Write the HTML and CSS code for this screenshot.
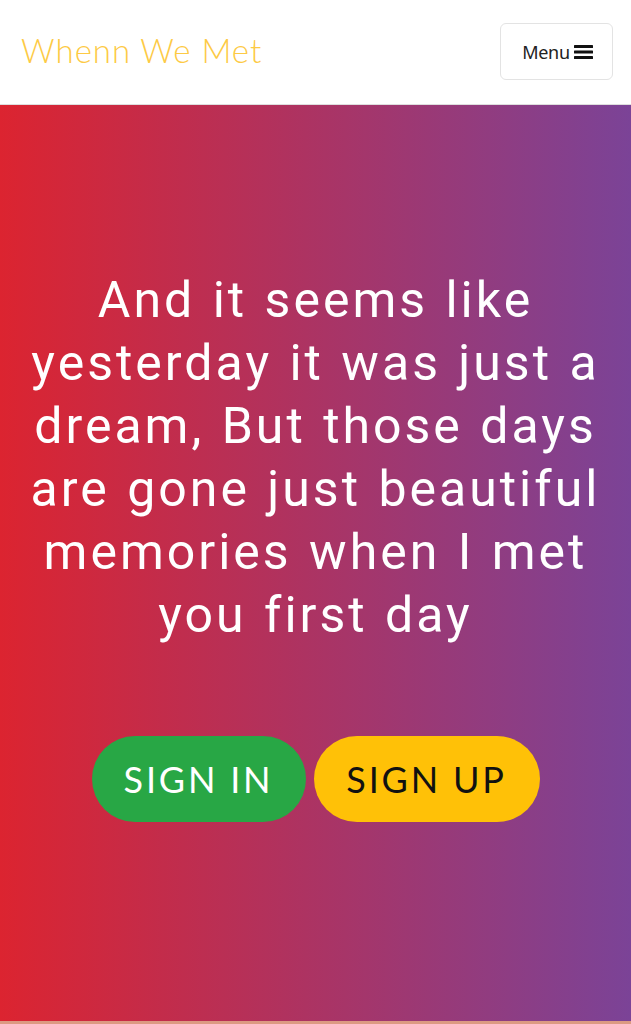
FILE: index.html
```html
<!DOCTYPE html>
<html lang="en">
<head>
<meta charset="utf-8">
<title>Whenn We Met</title>
<link rel="stylesheet" href="styles.css">
</head>
<body>
<nav class="navbar">
  <a class="brand" href="#">Whenn We Met</a>
  <button class="menu-btn" type="button">
    <span>Menu</span>
    <svg class="bars" width="19" height="16" viewBox="0 0 19 16" aria-hidden="true">
      <rect x="0" y="1" width="19" height="3" rx="0.6"/>
      <rect x="0" y="6.5" width="19" height="3" rx="0.6"/>
      <rect x="0" y="12" width="19" height="3" rx="0.6"/>
    </svg>
  </button>
</nav>
<header class="masthead">
  <h1 class="headline">And it seems like yesterday it was just a dream, But those days are gone just beautiful memories when I met you first day</h1>
  <div class="actions">
    <a class="pill pill-green" href="#">SIGN IN</a>
    <a class="pill pill-yellow" href="#">SIGN UP</a>
  </div>
</header>
<section class="next"></section>
</body>
</html>
```

FILE: styles.css
```css
* { box-sizing: border-box; }
html, body { margin: 0; padding: 0; }
body {
  font-family: "Lato", "Liberation Sans", sans-serif;
  background: #fff;
}
.navbar {
  height: 105px;
  display: flex;
  align-items: center;
  justify-content: space-between;
  padding: 0 18px 0 21px;
  background: #fff;
  border-bottom: 1px solid #dedede;
}
.brand {
  font-family: "Lato", sans-serif;
  font-weight: 300;
  font-size: 33px;
  letter-spacing: 1px;
  color: #fdca45;
  text-decoration: none;
  margin-top: -4px;
}
.menu-btn {
  width: 113px;
  height: 57px;
  margin-top: -1px;
  display: flex;
  align-items: center;
  justify-content: center;
  gap: 4px;
  background: #fff;
  border: 1px solid #e3e3e3;
  border-radius: 6px;
  font-family: "Noto Sans", sans-serif;
  font-size: 18px;
  color: #222;
  letter-spacing: -0.3px;
  padding: 0 0 0 2px;
}
.bars { fill: #111; }
.masthead {
  height: 916px;
  background: linear-gradient(to right, #dc2430, #7b4397);
  display: flex;
  flex-direction: column;
  align-items: center;
  padding: 164px 10px 0;
}
.headline {
  margin: 0;
  font-family: "Roboto", sans-serif;
  font-weight: 400;
  font-size: 50px;
  line-height: 63px;
  letter-spacing: 3px;
  word-spacing: 2px;
  color: #fff;
  text-align: center;
  max-width: 590px;
}
.actions {
  display: flex;
  gap: 8px;
  margin-top: 89px;
}
.pill {
  height: 86px;
  display: flex;
  align-items: center;
  justify-content: center;
  border-radius: 43px;
  font-family: "Lato", sans-serif;
  font-size: 36px;
  letter-spacing: 2.8px;
  text-decoration: none;
}
.pill-green {
  width: 214px;
  background: #28a745;
  color: #fff;
}
.pill-yellow {
  width: 226px;
  background: #ffc107;
  color: #111;
}
.next {
  height: 40px;
  background: #dc9a82;
}
```
